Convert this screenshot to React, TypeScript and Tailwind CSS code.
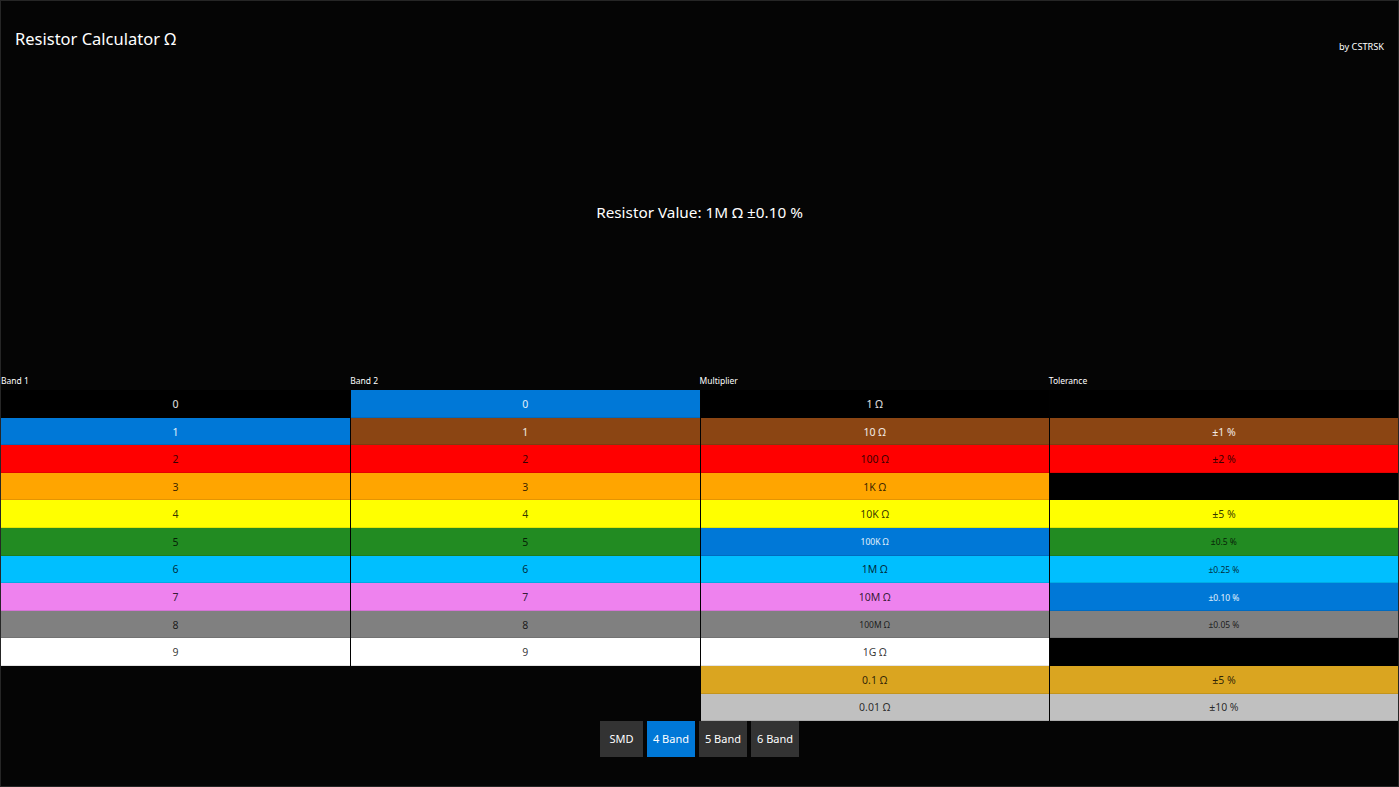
import { useState } from 'react';

type Cell = { label: string; color: string; small?: boolean };

const palette = {
  black: '#000000',
  brown: '#8B4513',
  red: '#FF0000',
  orange: '#FFA500',
  yellow: '#FFFF00',
  green: '#228B22',
  blue: '#00BFFF',
  violet: '#EE82EE',
  gray: '#808080',
  white: '#FFFFFF',
  gold: '#DAA520',
  silver: '#C0C0C0',
};

const digitColors = [
  palette.black,
  palette.brown,
  palette.red,
  palette.orange,
  palette.yellow,
  palette.green,
  palette.blue,
  palette.violet,
  palette.gray,
  palette.white,
];

const digits: Cell[] = digitColors.map((color, i) => ({ label: String(i), color }));

const multipliers: Cell[] = [
  { label: '1 Ω', color: palette.black },
  { label: '10 Ω', color: palette.brown },
  { label: '100 Ω', color: palette.red },
  { label: '1K Ω', color: palette.orange },
  { label: '10K Ω', color: palette.yellow },
  { label: '100K Ω', color: palette.green, small: true },
  { label: '1M Ω', color: palette.blue },
  { label: '10M Ω', color: palette.violet },
  { label: '100M Ω', color: palette.gray, small: true },
  { label: '1G Ω', color: palette.white },
  { label: '0.1 Ω', color: palette.gold },
  { label: '0.01 Ω', color: palette.silver },
];

const tolerances: Cell[] = [
  { label: '', color: palette.black },
  { label: '±1 %', color: palette.brown },
  { label: '±2 %', color: palette.red },
  { label: '', color: palette.black },
  { label: '±5 %', color: palette.yellow },
  { label: '±0.5 %', color: palette.green, small: true },
  { label: '±0.25 %', color: palette.blue, small: true },
  { label: '±0.10 %', color: palette.violet, small: true },
  { label: '±0.05 %', color: palette.gray, small: true },
  { label: '', color: palette.black },
  { label: '±5 %', color: palette.gold },
  { label: '±10 %', color: palette.silver },
];

const darkBgs = [palette.black, palette.brown];

function BandColumn({
  title,
  items,
  selected,
  onSelect,
  first,
}: {
  title: string;
  items: Cell[];
  selected: number;
  onSelect: (i: number) => void;
  first?: boolean;
}) {
  return (
    <div className="flex flex-col">
      <div className="h-[18px] flex items-center text-[8.5px] text-white leading-none">{title}</div>
      <div className={first ? 'flex flex-col' : 'flex flex-col border-l border-black/70'}>
        {items.map((item, i) => {
          const isSel = i === selected;
          const bg = isSel ? '#0078D7' : item.color;
          const light = isSel || darkBgs.includes(item.color);
          return (
            <button
              key={i}
              type="button"
              onClick={() => onSelect(i)}
              className={
                'h-[27.6px] w-full flex items-center justify-center pt-[3px] border-b border-black/10 ' +
                (item.small ? 'text-[8.5px] ' : 'text-[10.5px] ') +
                (light ? 'text-white/90' : 'text-black/80')
              }
              style={{ backgroundColor: bg }}
            >
              {item.label}
            </button>
          );
        })}
      </div>
    </div>
  );
}

export default function App() {
  const [b1, setB1] = useState(1);
  const [b2, setB2] = useState(0);
  const [mul, setMul] = useState(5);
  const [tol, setTol] = useState(7);
  const [mode, setMode] = useState('4 Band');

  return (
    <div
      className="w-[1399px] h-[787px] bg-[#050505] border border-[#262626] flex flex-col overflow-hidden text-white"
      style={{ fontFamily: '"Segoe UI", "Noto Sans", "Open Sans", sans-serif' }}
    >
      <div className="h-[371px] flex flex-col">
        <div className="h-[200px] flex items-start justify-between pl-[14px] pr-[14px] pt-[30px]">
          <h1 className="text-[16.5px] leading-none">Resistor Calculator Ω</h1>
          <span className="text-[9.2px] leading-none mt-[11px]">by CSTRSK</span>
        </div>
        <div className="h-[22px] flex items-center justify-center">
          <span className="text-[15.3px]">Resistor Value: 1M Ω ±0.10 %</span>
        </div>
      </div>

      <div className="grid grid-cols-4">
        <BandColumn title="Band 1" items={digits} selected={b1} onSelect={setB1} first />
        <BandColumn title="Band 2" items={digits} selected={b2} onSelect={setB2} />
        <BandColumn title="Multiplier" items={multipliers} selected={mul} onSelect={setMul} />
        <BandColumn title="Tolerance" items={tolerances} selected={tol} onSelect={setTol} />
      </div>

      <div className="flex justify-center gap-[4px]">
        {['SMD', '4 Band', '5 Band', '6 Band'].map((m) => (
          <button
            key={m}
            type="button"
            onClick={() => setMode(m)}
            className={
              'h-[36px] min-w-[43px] px-[6px] text-[11px] text-white ' +
              (mode === m ? 'bg-[#0078D7]' : 'bg-[#333333]')
            }
          >
            {m}
          </button>
        ))}
      </div>
    </div>
  );
}
